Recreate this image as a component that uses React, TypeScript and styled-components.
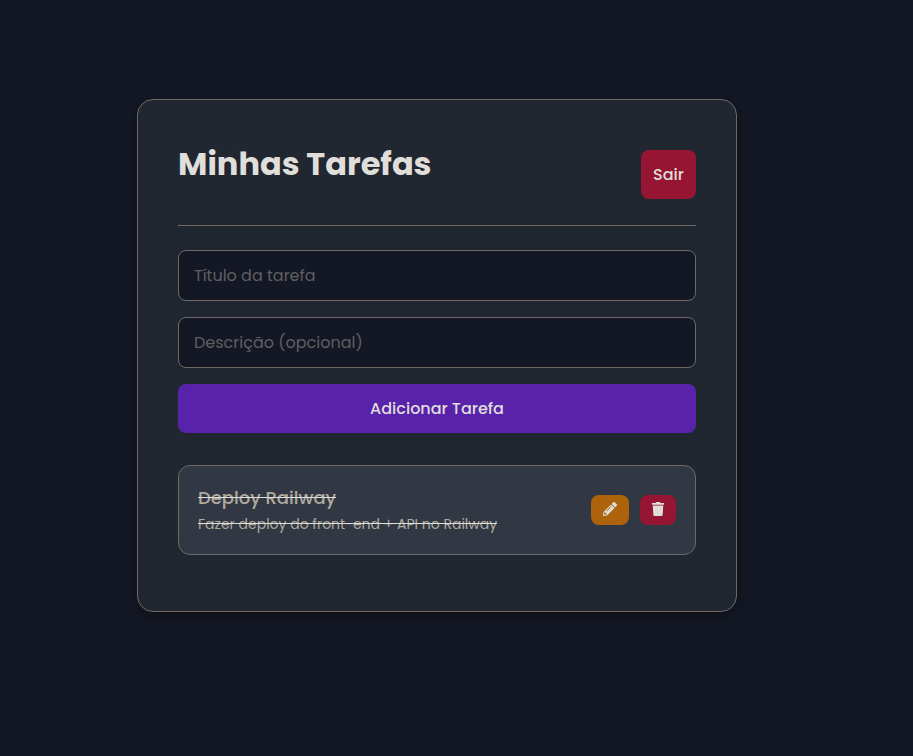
import React, { useState } from "react";
import styled, { createGlobalStyle } from "styled-components";
import { FaPencilAlt, FaTrash } from "react-icons/fa";

const GlobalStyle = createGlobalStyle`
  *, *::before, *::after { box-sizing: border-box; }
  body {
    margin: 0;
    background: #141824;
    color: #e0dedb;
    font-family: Poppins, Inter, "Open Sans", sans-serif;
    font-size: 16px;
    line-height: 24px;
  }
`;

const Page = styled.div`
  padding: 99px 176px 144px 137px;
`;

const Card = styled.main`
  max-width: 600px;
  padding: 40px 40px 56px;
  background: #202730;
  border: 1px solid #706a62;
  border-radius: 16px;
  box-shadow: 0 4px 12px rgba(0, 0, 0, 0.3);
`;

const Header = styled.header`
  display: flex;
  justify-content: space-between;
  align-items: flex-start;
  padding: 10px 0 26px;
  margin-bottom: 24px;
  border-bottom: 1px solid #706a62;
`;

const Title = styled.h1`
  margin: 0;
  font-size: 32px;
  line-height: 28px;
  font-weight: 700;
`;

const Button = styled.button<{ $color: string }>`
  padding: 12px;
  border: 0;
  border-radius: 8px;
  background: ${({ $color }) => $color};
  color: #e0dedb;
  font: inherit;
  font-weight: 500;
  line-height: 25px;
  cursor: pointer;
`;

const IconButton = styled(Button)<{ $width: number }>`
  display: flex;
  align-items: flex-start;
  justify-content: center;
  width: ${({ $width }) => $width}px;
  height: 30px;
  padding: 7px 0;

  svg {
    width: 14px;
    height: 14px;
  }
`;

const Form = styled.form`
  display: grid;
  gap: 16px;
  margin-bottom: 32px;
`;

const Field = styled.input`
  width: 100%;
  height: 51px;
  padding: 0 15px;
  border: 1px solid #706a62;
  border-radius: 8px;
  background: #141824;
  color: #e0dedb;
  font: inherit;
  &::placeholder { color: #605f61; opacity: 1; }
`;

const List = styled.ul`
  margin: 0;
  padding: 0;
  list-style: none;
`;

const Task = styled.li`
  display: flex;
  align-items: center;
  justify-content: space-between;
  padding: 18px 19px;
  border: 1px solid #706a62;
  border-radius: 12px;
  background: #313843;
`;

const TaskText = styled.div`
  color: #b0a99e;
  text-decoration: line-through #e0dedb;
`;

const TaskTitle = styled.h2`
  margin: 0;
  font-size: 18px;
  line-height: 28px;
  font-weight: 500;
`;

const Description = styled.p`
  margin: 0;
  font-size: 14px;
  line-height: 24px;
`;

const Actions = styled.div`
  display: flex;
  gap: 11px;
`;

export default function App() {
  const [title, setTitle] = useState("");
  const [description, setDescription] = useState("");
  return (
    <>
      <GlobalStyle />
      <Page>
        <Card>
          <Header>
            <Title>Minhas Tarefas</Title>
            <Button type="button" $color="#951532">Sair</Button>
          </Header>
          <Form onSubmit={(e) => e.preventDefault()}>
            <Field aria-label="Título da tarefa" placeholder="Título da tarefa" value={title} onChange={(e) => setTitle(e.target.value)} />
            <Field aria-label="Descrição" placeholder="Descrição (opcional)" value={description} onChange={(e) => setDescription(e.target.value)} />
            <Button type="submit" $color="#5822aa">Adicionar Tarefa</Button>
          </Form>
          <List>
            <Task>
              <TaskText>
                <TaskTitle>Deploy Railway</TaskTitle>
                <Description>Fazer deploy do front-end + API no Railway</Description>
              </TaskText>
              <Actions>
                <IconButton type="button" $color="#ad620c" $width={38} aria-label="Editar"><FaPencilAlt /></IconButton>
                <IconButton type="button" $color="#951532" $width={36} aria-label="Excluir"><FaTrash /></IconButton>
              </Actions>
            </Task>
          </List>
        </Card>
      </Page>
    </>
  );
}
